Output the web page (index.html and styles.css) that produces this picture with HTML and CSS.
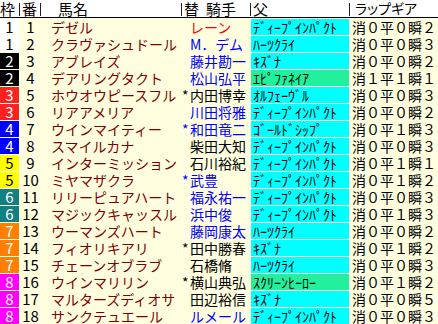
FILE: index.html
```html
<!DOCTYPE html>
<html lang="ja">
<head>
<meta charset="utf-8">
<link rel="stylesheet" href="styles.css">
</head>
<body>
<div class="board">
  <div class="head">
    <div class="hc h-waku">枠</div>
    <div class="hc h-ban">番</div>
    <div class="hc h-name">馬名</div>
    <div class="hc h-jock"><span>替</span><span class="h-jk2">騎手</span></div>
    <div class="hc h-sire">父</div>
    <div class="hc h-lap last">ラップギア</div>
  </div>
  <div class="rows">
    <div class="row"><div class="waku f1">1</div><div class="ban">1</div><div class="name">デゼル</div><div class="jock jr"><span class="mk"></span>レーン</div><div class="sire sc">ﾃﾞｨｰﾌﾟｲﾝﾊﾟｸﾄ</div><div class="lap">消０平０瞬２</div></div>
    <div class="row"><div class="waku f1">1</div><div class="ban">2</div><div class="name">クラヴァシュドール</div><div class="jock jb"><span class="mk"></span>M．デム</div><div class="sire sc">ﾊｰﾂｸﾗｲ</div><div class="lap">消０平０瞬３</div></div>
    <div class="row"><div class="waku f2">2</div><div class="ban">3</div><div class="name">アブレイズ</div><div class="jock jb"><span class="mk"></span>藤井勘一</div><div class="sire sc">ｷｽﾞﾅ</div><div class="lap">消０平０瞬２</div></div>
    <div class="row"><div class="waku f2">2</div><div class="ban">4</div><div class="name">デアリングタクト</div><div class="jock jb"><span class="mk"></span>松山弘平</div><div class="sire sg">ｴﾋﾟﾌｧﾈｲｱ</div><div class="lap">消１平１瞬１</div></div>
    <div class="row"><div class="waku f3">3</div><div class="ban">5</div><div class="name">ホウオウピースフル</div><div class="jock jk"><span class="mk">*</span>内田博幸</div><div class="sire sc">ｵﾙﾌｪｰｳﾞﾙ</div><div class="lap">消０平０瞬３</div></div>
    <div class="row"><div class="waku f3">3</div><div class="ban">6</div><div class="name">リアアメリア</div><div class="jock jb"><span class="mk"></span>川田将雅</div><div class="sire sc">ﾃﾞｨｰﾌﾟｲﾝﾊﾟｸﾄ</div><div class="lap">消０平０瞬２</div></div>
    <div class="row"><div class="waku f4">4</div><div class="ban">7</div><div class="name">ウインマイティー</div><div class="jock jb"><span class="mk">*</span>和田竜二</div><div class="sire sc">ｺﾞｰﾙﾄﾞｼｯﾌﾟ</div><div class="lap">消０平１瞬３</div></div>
    <div class="row"><div class="waku f4">4</div><div class="ban">8</div><div class="name">スマイルカナ</div><div class="jock jk"><span class="mk"></span>柴田大知</div><div class="sire sc">ﾃﾞｨｰﾌﾟｲﾝﾊﾟｸﾄ</div><div class="lap">消０平０瞬３</div></div>
    <div class="row"><div class="waku f5">5</div><div class="ban">9</div><div class="name">インターミッション</div><div class="jock jk"><span class="mk"></span>石川裕紀</div><div class="sire sc">ﾃﾞｨｰﾌﾟｲﾝﾊﾟｸﾄ</div><div class="lap">消０平１瞬１</div></div>
    <div class="row"><div class="waku f5">5</div><div class="ban">10</div><div class="name">ミヤマザクラ</div><div class="jock jb"><span class="mk">*</span>武豊</div><div class="sire sc">ﾃﾞｨｰﾌﾟｲﾝﾊﾟｸﾄ</div><div class="lap">消０平１瞬２</div></div>
    <div class="row"><div class="waku f6">6</div><div class="ban">11</div><div class="name">リリーピュアハート</div><div class="jock jb"><span class="mk"></span>福永祐一</div><div class="sire sc">ﾃﾞｨｰﾌﾟｲﾝﾊﾟｸﾄ</div><div class="lap">消０平０瞬３</div></div>
    <div class="row"><div class="waku f6">6</div><div class="ban">12</div><div class="name">マジックキャッスル</div><div class="jock jb"><span class="mk"></span>浜中俊</div><div class="sire sc">ﾃﾞｨｰﾌﾟｲﾝﾊﾟｸﾄ</div><div class="lap">消０平１瞬３</div></div>
    <div class="row"><div class="waku f7">7</div><div class="ban">13</div><div class="name">ウーマンズハート</div><div class="jock jb"><span class="mk"></span>藤岡康太</div><div class="sire sc">ﾊｰﾂｸﾗｲ</div><div class="lap">消０平０瞬２</div></div>
    <div class="row"><div class="waku f7">7</div><div class="ban">14</div><div class="name">フィオリキアリ</div><div class="jock jk"><span class="mk">*</span>田中勝春</div><div class="sire sc">ｷｽﾞﾅ</div><div class="lap">消０平１瞬２</div></div>
    <div class="row"><div class="waku f7">7</div><div class="ban">15</div><div class="name">チェーンオブラブ</div><div class="jock jk"><span class="mk"></span>石橋脩</div><div class="sire sc">ﾊｰﾂｸﾗｲ</div><div class="lap">消０平０瞬３</div></div>
    <div class="row"><div class="waku f8">8</div><div class="ban">16</div><div class="name">ウインマリリン</div><div class="jock jk"><span class="mk">*</span>横山典弘</div><div class="sire sg">ｽｸﾘｰﾝﾋｰﾛｰ</div><div class="lap">消０平１瞬２</div></div>
    <div class="row"><div class="waku f8">8</div><div class="ban">17</div><div class="name">マルターズディオサ</div><div class="jock jk"><span class="mk"></span>田辺裕信</div><div class="sire sc">ｷｽﾞﾅ</div><div class="lap">消０平０瞬５</div></div>
    <div class="row"><div class="waku f8">8</div><div class="ban">18</div><div class="name">サンクテュエール</div><div class="jock jb"><span class="mk"></span>ルメール</div><div class="sire sc">ﾃﾞｨｰﾌﾟｲﾝﾊﾟｸﾄ</div><div class="lap">消０平０瞬３</div></div>
  </div>
</div>
</body>
</html>
```

FILE: styles.css
```css
* { box-sizing: border-box; margin: 0; padding: 0; }
html, body { background: #ffffe0; }
body {
  margin: 0;
  font-family: "Noto Sans CJK JP", "Noto Sans", sans-serif;
  color: #000;
}
.board {
  width: 438px;
  height: 324px;
  overflow: hidden;
}
.head {
  display: grid;
  grid-template-columns: 20px 21px 141px 69px 99px 88px;
  height: 18px;
  background: #fff;
  border-bottom: 1px solid #000;
  font-size: 15px;
  line-height: 17px;
  font-feature-settings: "palt";
}
.hc {
  white-space: nowrap;
  background: linear-gradient(#222, #222) right 0 top 3px / 1px 13px no-repeat;
}
.hc.last { background: none; }
.h-waku { padding-left: 0; }
.h-ban { padding-left: 2px; }
.h-name { padding-left: 17px; }
.h-jock { padding-left: 2px; }
.h-jk2 { margin-left: 7px; }
.h-sire { padding-left: 2px; }
.h-lap { padding-left: 5px; font-size: 14px; }

.rows {
  display: grid;
  row-gap: 1px;
  padding-top: 1px;
}
.row {
  display: grid;
  grid-template-columns: 20px 21px 141px 69px 99px 88px;
  height: 16px;
  font-size: 14px;
  line-height: 16px;
  white-space: nowrap;
}
.waku {
  width: 19px;
  text-align: center;
  font-size: 15px;
  color: #fff;
}
.f1 { background: #fff; color: #000; }
.f2 { background: #000; }
.f3 { background: #ff2020; }
.f4 { background: #0000ff; }
.f5 { background: #ffff00; color: #000; }
.f6 { background: #108080; }
.f7 { background: #ff8000; }
.f8 { background: #ff00ff; }
.ban {
  text-align: center;
  font-size: 15px;
}
.name {
  padding-left: 10px;
  color: #800000;
}
.jock { display: flex; }
.mk {
  display: inline-block;
  width: 8px;
  text-align: left;
  flex: none;
}
.jb { color: #0000ff; }
.jr { color: #ff0000; }
.jk { color: #000; }
.sire {
  margin-right: 1px;
  padding-left: 2px;
  color: #000;
  font-size: 14px;
}
.sc { background: #00ffff; }
.sg { background: #22f09c; }
.lap { padding-left: 2px; }
```
